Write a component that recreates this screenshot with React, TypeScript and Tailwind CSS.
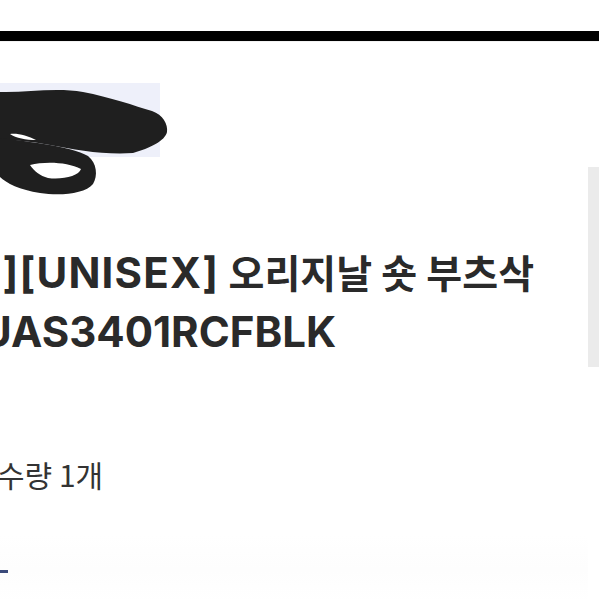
import React from 'react';

const titleFont = { fontFamily: 'Inter, "Noto Sans CJK KR", sans-serif' };

function Scribble() {
  return (
    <svg className="absolute left-0 top-0" width="180" height="120" viewBox="0 83 180 120">
      {/* marker blob drawn over the photo */}
      <path
        d="M0,92 C25,93 55,87 83,92 C110,97 135,106 152,111 C163,115 168,124 167,132 C165,141 150,148 133,153 C105,155 75,150 50,145 C30,141 12,140 0,140 Z"
        fill="#1f1f1f"
      />
      <path
        fillRule="evenodd"
        d="M0,138 C30,142 70,146 88,156 C97,163 98,176 93,184 C85,194 60,196 40,193 C20,190 6,183 0,177 Z M30,165 C45,161 68,162 81,169 C79,176 62,180 48,178 C40,176 34,171 30,165 Z"
        fill="#1f1f1f"
      />
      <path d="M10,134 C18,133 28,136 36,140 C26,140 16,138 10,134 Z" fill="#ffffff" />
    </svg>
  );
}

export default function App() {
  return (
    <div className="w-[599px] h-[599px] overflow-hidden bg-white relative">
      <div className="h-[31px]" />
      <div className="h-[10px] bg-black" />
      <div className="h-[1px] bg-[#f2f2f2]" />
      <div className="flex">
        <div className="flex-1 min-w-0">
          {/* product photo, redacted */}
          <div className="relative mt-[41px] h-[74px]">
            <div className="w-[160px] h-[74px] bg-[#eef0fa]" />
            <Scribble />
          </div>

          {/* product name */}
          <div
            className="mt-[87px] text-[42px] font-bold leading-[58px] text-[#2a2a2a] whitespace-nowrap"
            style={titleFont}
          >
            <div className="ml-[-174px]">
              <span className="tracking-[1.2px]">[스마일리][UNISEX]</span>
              <span className="text-[39px]"> 오리지날 숏 부츠삭</span>
            </div>
            <div className="ml-[-19px]">UAS3401RCFBLK</div>
          </div>

          {/* quantity */}
          <div
            className="mt-[93px] ml-[-3px] text-[30px] leading-[40px] text-[#333333]"
            style={{ fontFamily: '"Noto Sans CJK KR", sans-serif' }}
          >
            수량 1개
          </div>

          <div className="mt-[40px] h-[70px] bg-gradient-to-b from-white via-[#fdfdfd] to-white">
            <div className="pt-[36px]">
              <div className="w-[8px] h-[3px] bg-[#3b4a7a]" />
            </div>
          </div>
        </div>

        <div className="w-[11px] shrink-0">
          <div className="mt-[125px] h-[200px] bg-[#ebebeb]" />
        </div>
      </div>
    </div>
  );
}
